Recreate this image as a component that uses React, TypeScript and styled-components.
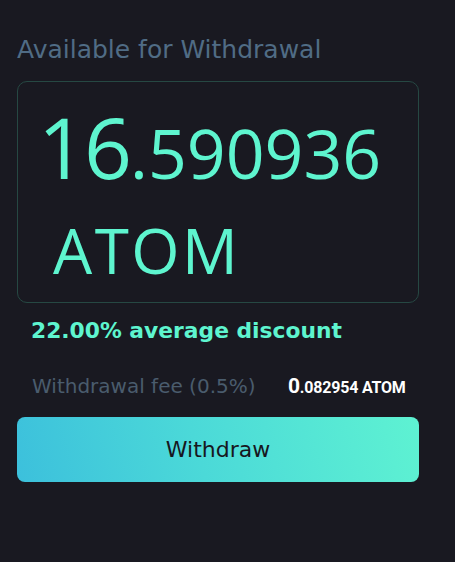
import React from 'react';
import styled, { createGlobalStyle } from 'styled-components';

const GlobalStyle = createGlobalStyle`
  html, body {
    margin: 0;
    padding: 0;
    background: #191921;
  }
  body {
    font-family: "Open Sans", "DejaVu Sans", sans-serif;
  }
`;

const Page = styled.div`
  width: 402px;
  padding: 35px 0 0 17px;
  display: flex;
  flex-direction: column;
`;

const Title = styled.h2`
  margin: 0 0 16px;
  font-family: "DejaVu Sans", sans-serif;
  font-size: 25px;
  font-weight: 400;
  line-height: 30px;
  color: #506c85;
`;

const BalanceBox = styled.div`
  box-sizing: border-box;
  height: 222px;
  border: 1px solid #264843;
  border-radius: 10px;
  padding: 20px 20px 0 20px;
  color: #5ef5cf;
  font-family: "Open Sans", sans-serif;
`;

const Amount = styled.div`
  line-height: 90px;
  white-space: nowrap;
`;

const Whole = styled.span`
  font-size: 84px;
  font-weight: 400;
  letter-spacing: -2px;
`;

const Fraction = styled.span`
  font-size: 68px;
  font-weight: 400;
`;

const Unit = styled.div`
  margin: -8px 0 0 15px;
  font-size: 62px;
  line-height: 80px;
  letter-spacing: 2.5px;
`;

const Discount = styled.div`
  margin: 14px 0 0 14px;
  font-family: "DejaVu Sans", sans-serif;
  font-size: 21.8px;
  font-weight: 700;
  line-height: 28px;
  color: #5ef5cf;
`;

const FeeRow = styled.div`
  display: flex;
  align-items: baseline;
  margin: 26px 0 0 15px;
  height: 30px;
  line-height: 30px;
`;

const FeeLabel = styled.span`
  font-family: "DejaVu Sans", sans-serif;
  font-size: 20px;
  font-weight: 400;
  color: #4a5c6d;
  width: 256px;
  white-space: nowrap;
`;

const FeeValue = styled.span`
  font-family: Roboto, "Liberation Sans", sans-serif;
  font-weight: 700;
  color: #ffffff;
  font-size: 16px;
  letter-spacing: -0.2px;
  white-space: nowrap;
`;

const FeeLead = styled.span`
  font-size: 21px;
`;

const WithdrawButton = styled.button`
  margin-top: 16px;
  height: 65px;
  border: none;
  border-radius: 8px;
  background: linear-gradient(75deg, #3cc0dc 0%, #4bd9d8 45%, #5ef2d2 100%);
  color: #17171e;
  font-family: "DejaVu Sans", sans-serif;
  font-size: 22px;
  font-weight: 400;
  cursor: pointer;
`;

export default function App() {
  return (
    <>
      <GlobalStyle />
      <Page>
        <Title>Available for Withdrawal</Title>
        <BalanceBox>
          <Amount>
            <Whole>16</Whole>
            <Fraction>.590936</Fraction>
          </Amount>
          <Unit>ATOM</Unit>
        </BalanceBox>
        <Discount>22.00% average discount</Discount>
        <FeeRow>
          <FeeLabel>Withdrawal fee (0.5%)</FeeLabel>
          <FeeValue>
            <FeeLead>0</FeeLead>.082954 ATOM
          </FeeValue>
        </FeeRow>
        <WithdrawButton>Withdraw</WithdrawButton>
      </Page>
    </>
  );
}
